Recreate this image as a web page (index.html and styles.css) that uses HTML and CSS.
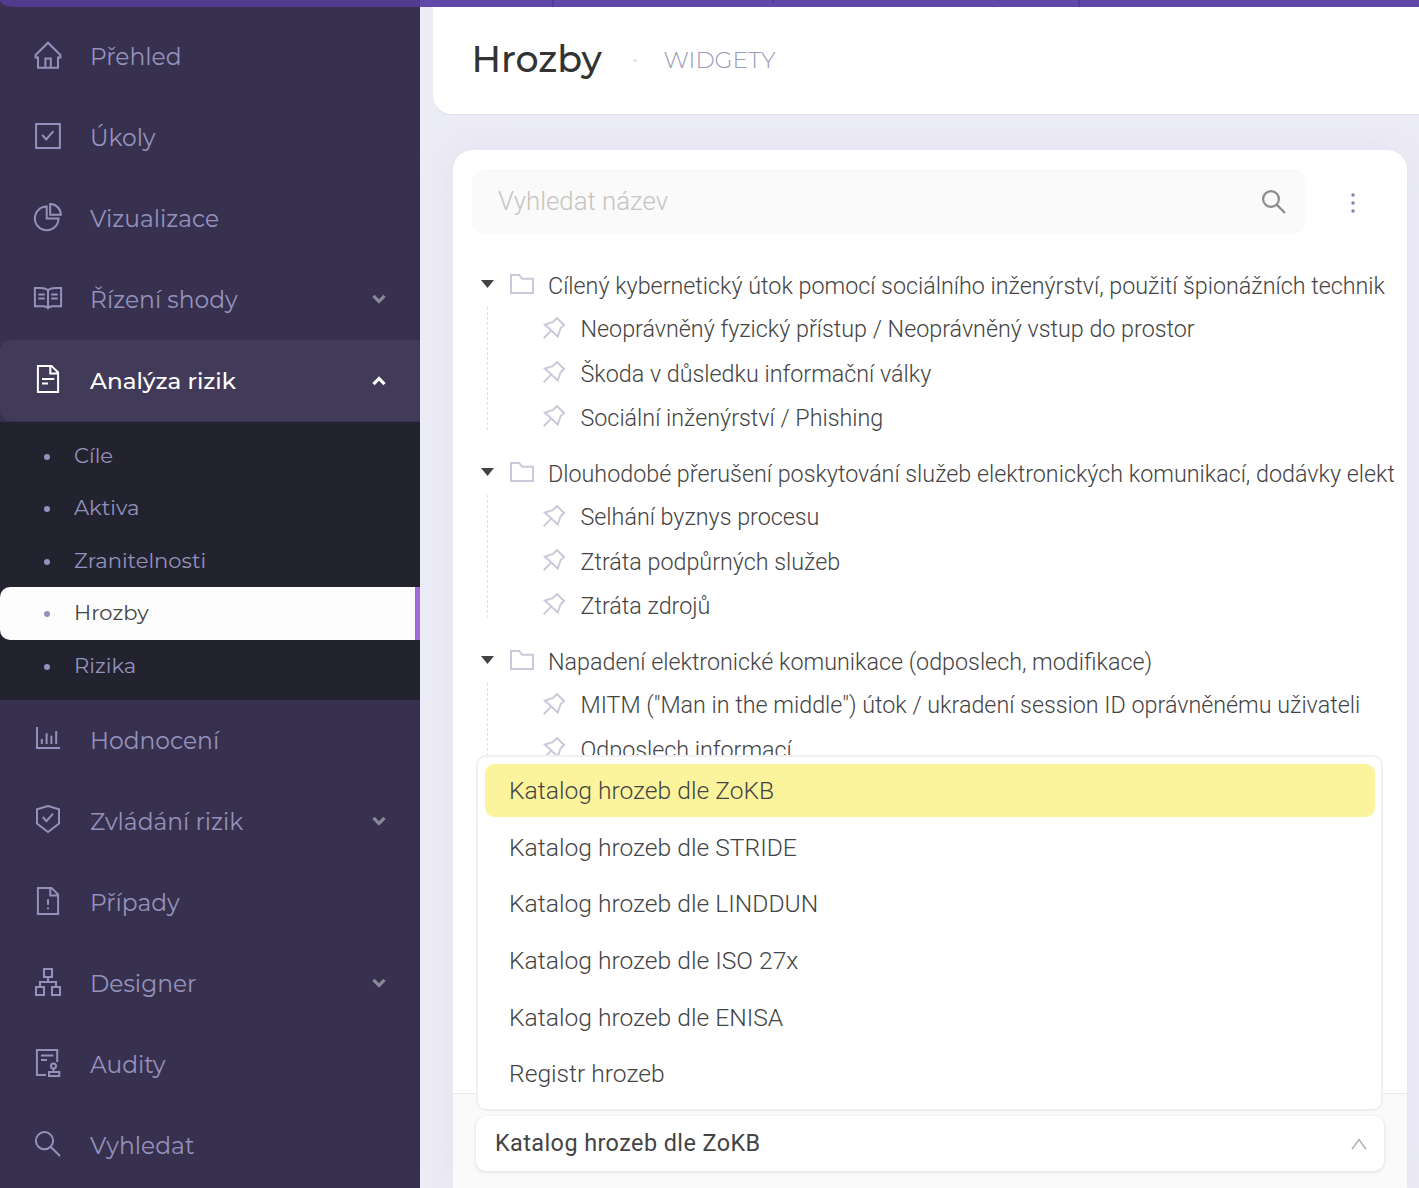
FILE: index.html
```html
<!DOCTYPE html>
<html lang="cs">
<head>
<meta charset="utf-8">
<title>Hrozby</title>
<link rel="stylesheet" href="styles.css">
</head>
<body>
<svg class="sprite" aria-hidden="true">
  <symbol id="chevron" viewBox="0 0 14 10"><path d="M1.500 1.800 7 7.500 12.500 1.800"/></symbol>
  <symbol id="folder" viewBox="0 0 24 20"><path d="M1 1H9.2L12.2 4.8H23V19H1z"/></symbol>
  <symbol id="pin" viewBox="0 0 22 22"><path d="M14 1 21 8 17.6 11.2 14.8 19.4 1.8 7.6 9.6 5.2zM8.2 13.6.6 21.4"/></symbol>
  <symbol id="caret" viewBox="0 0 13 8"><path d="M0 0H13L6.5 8z"/></symbol>
</svg>
<div class="topbar"><div class="topbar-brand"></div><div class="topbar-main"><i class="tick tick-a"></i><i class="tick tick-b"></i><i class="tick tick-c"></i><i class="tick tick-d"></i></div></div>
<div class="shell">
  <nav class="sidebar">
    <a class="item"><svg class="icon" viewBox="0 0 28 28"><path d="M4 26.7V16.4H1.6V14L14 1.7 26.4 14v2.4H24V26.7zM11.4 26.5V17.4h5.4v9.1"/></svg><span class="label">Přehled</span></a>
    <a class="item"><svg class="icon" viewBox="0 0 28 28"><path d="M2.1 2.1H25.9V25.9H2.1zM8.2 12.8 12.2 17.4 19.4 9.2"/></svg><span class="label">Úkoly</span></a>
    <a class="item"><svg class="icon" viewBox="0 0 28 28"><path d="M12.7 3.6A11.8 11.8 0 1 0 24.5 15.4H12.7zM16.2 1.1A10.7 10.7 0 0 1 26.9 11.8H16.2z"/></svg><span class="label">Vizualizace</span></a>
    <a class="item"><svg class="icon" viewBox="0 0 28 28"><path d="M14 6C11.6 4.2 9 3.9 6.5 3.9H.9V22.2H9.5C11.5 22.2 13 22.9 14 24.2 15 22.9 16.5 22.2 18.5 22.2H27.1V3.9H21.5C19 3.9 16.4 4.2 14 6zM14 6V24M4.3 10.4H10.8M4.3 14.4H10.8M17.2 10.4H23.7M17.2 14.4H23.7"/></svg><span class="label">Řízení shody</span><svg class="chev"><use href="#chevron"/></svg></a>
    <a class="item active"><svg class="icon" viewBox="0 0 28 28"><path d="M3.9.9H17.5L24.1 7.5V27.1H3.9zM16.3 1V8.6H24M8 14H20.3M8 18.4H14"/></svg><span class="label">Analýza rizik</span><svg class="chev up"><use href="#chevron"/></svg></a>
    <div class="submenu">
      <a class="sub"><span>Cíle</span></a>
      <a class="sub"><span>Aktiva</span></a>
      <a class="sub"><span>Zranitelnosti</span></a>
      <a class="sub current"><span>Hrozby</span></a>
      <a class="sub"><span>Rizika</span></a>
    </div>
    <a class="item"><svg class="icon" viewBox="0 0 28 28"><path d="M3 2V23H26M7.8 14V19M12.6 8.3V19M17.4 10.7V19M22.2 6V19"/></svg><span class="label">Hodnocení</span></a>
    <a class="item"><svg class="icon" viewBox="0 0 28 28"><path d="M14 0 25 3.2V17.5L14 26 3 17.5V3.2zM8.8 11 12.4 15.2 19 7.6"/></svg><span class="label">Zvládání rizik</span><svg class="chev"><use href="#chevron"/></svg></a>
    <a class="item"><svg class="icon" viewBox="0 0 28 28"><path d="M3.9.9H17.5L24.1 7.5V27.1H3.9zM16.3 1V8.6H24M14 12.3V17.8M14 20.4V22.2"/></svg><span class="label">Případy</span></a>
    <a class="item"><svg class="icon" viewBox="0 0 28 28"><path d="M10 1H18V9H10zM2 19H10V27H2zM18 19H26V27H18zM14 9V14M6 19V14H22V19"/></svg><span class="label">Designer</span><svg class="chev"><use href="#chevron"/></svg></a>
    <a class="item"><svg class="icon" viewBox="0 0 28 28"><path d="M23.2 13V.9H2.9V26.1H12M7 6.5H19.3M7 11H13M19.5 19.5V22.8M15 22.9H25.3V27H15z"/><circle cx="19.5" cy="17" r="2.5"/></svg><span class="label">Audity</span></a>
    <a class="item"><svg class="icon" viewBox="0 0 28 28"><circle cx="10.5" cy="10.7" r="8.6"/><path d="M16.6 16.8 26 26"/></svg><span class="label">Vyhledat</span></a>
  </nav>
  <main class="main">
    <header class="header"><h1 class="title">Hrozby</h1><i class="sep"></i><span class="tab">WIDGETY</span></header>
    <section class="card">
      <div class="tools">
        <div class="search"><span>Vyhledat název</span><svg class="glass" viewBox="0 0 24 24"><circle cx="9" cy="9" r="7.9"/><path d="M14.6 14.6 23 23"/></svg></div>
        <svg class="dots" viewBox="0 0 4 20"><circle cx="2" cy="2" r="1.7"/><circle cx="2" cy="10" r="1.7"/><circle cx="2" cy="18" r="1.7"/></svg>
      </div>
      <div class="tree">
        <div class="group">
          <div class="root"><svg class="caret"><use href="#caret"/></svg><svg class="folder"><use href="#folder"/></svg>Cílený kybernetický útok pomocí sociálního inženýrství, použití špionážních technik</div>
          <div class="kids">
            <div class="kid"><svg class="pin"><use href="#pin"/></svg>Neoprávněný fyzický přístup / Neoprávněný vstup do prostor</div>
            <div class="kid"><svg class="pin"><use href="#pin"/></svg>Škoda v důsledku informační války</div>
            <div class="kid"><svg class="pin"><use href="#pin"/></svg>Sociální inženýrství / Phishing</div>
          </div>
        </div>
        <div class="group">
          <div class="root"><svg class="caret"><use href="#caret"/></svg><svg class="folder"><use href="#folder"/></svg>Dlouhodobé přerušení poskytování služeb elektronických komunikací, dodávky elekt</div>
          <div class="kids">
            <div class="kid"><svg class="pin"><use href="#pin"/></svg>Selhání byznys procesu</div>
            <div class="kid"><svg class="pin"><use href="#pin"/></svg>Ztráta podpůrných služeb</div>
            <div class="kid"><svg class="pin"><use href="#pin"/></svg>Ztráta zdrojů</div>
          </div>
        </div>
        <div class="group">
          <div class="root"><svg class="caret"><use href="#caret"/></svg><svg class="folder"><use href="#folder"/></svg>Napadení elektronické komunikace (odposlech, modifikace)</div>
          <div class="kids">
            <div class="kid"><svg class="pin"><use href="#pin"/></svg>MITM ("Man in the middle") útok / ukradení session ID oprávněnému uživateli</div>
            <div class="kid"><svg class="pin"><use href="#pin"/></svg>Odposlech informací</div>
          </div>
        </div>
      </div>
      <footer class="foot">
        <div class="select"><span>Katalog hrozeb dle ZoKB</span><svg class="open" viewBox="0 0 16 12"><path d="M1 11.2 8 1.5 15 11.2"/></svg></div>
        <div class="menu">
          <div class="opt chosen">Katalog hrozeb dle ZoKB</div>
          <div class="opt">Katalog hrozeb dle STRIDE</div>
          <div class="opt">Katalog hrozeb dle LINDDUN</div>
          <div class="opt">Katalog hrozeb dle ISO 27x</div>
          <div class="opt">Katalog hrozeb dle ENISA</div>
          <div class="opt">Registr hrozeb</div>
        </div>
      </footer>
    </section>
  </main>
</div>
</body>
</html>
```
FILE: styles.css
```css
* { box-sizing: border-box; }
body {
  margin: 0;
  height: 1188px;
  display: flex;
  flex-direction: column;
  overflow: hidden;
  background: #ececf6;
  color: #444;
  font-family: Roboto, "Liberation Sans", sans-serif;
  font-weight: 300;
}
.sprite { position: absolute; width: 0; height: 0; }
svg { fill: none; flex: none; display: block; }

/* top strip */
.topbar { display: flex; height: 7px; flex: none; background: #37304e; }
.topbar-brand { width: 420px; background: #503b8d; border-bottom-left-radius: 14px 7px; }
.topbar-main { position: relative; flex: 1; background: #6148a8; }
.tick { position: absolute; top: 0; width: 2px; height: 7px; background: #523d92; }
.tick-a { left: 132px; }
.tick-b { left: 352px; height: 3px; }
.tick-c { left: 578px; height: 1px; }
.tick-d { left: 658px; }

.shell { display: flex; flex: 1; min-height: 0; }

/* sidebar */
.sidebar {
  width: 420px;
  flex: none;
  padding-top: 9px;
  background: #37304e;
  color: #9492bc;
  font-family: Montserrat, Inter, "Liberation Sans", sans-serif;
  font-weight: 400;
}
.item {
  display: flex;
  align-items: center;
  height: 81px;
  padding: 0 34.5px 0 34px;
  font-size: 23.4px;
  white-space: nowrap;
}
.icon {
  width: 28px;
  height: 28px;
  margin: 0 28px 3px 0;
  overflow: visible;
  stroke: currentColor;
  stroke-width: 2;
}
.item .label { padding-bottom: 1px; }
.chev { width: 14px; height: 10px; margin: 0 0 2px auto; overflow: visible; stroke: #8b8898; stroke-width: 3.2; }
.active { background: #413a58; color: #fff; border-radius: 10px 0 0 10px; }
.active .label { padding: 1px 0 0; font-weight: 500; font-size: 23.1px; }
.chev.up { margin-bottom: 0; transform: rotate(180deg); stroke: #fff; }

.submenu { margin-top: 1px; height: 278px; padding-top: 7.4px; background: #22232f; }
.sub {
  display: flex;
  align-items: center;
  height: 52.6px;
  padding: 0 0 1px 44px;
  font-size: 21.1px;
}
.sub:first-child { padding-bottom: 0; }
.sub::before { content: ""; width: 6px; height: 6px; margin: 3px 24px 0 0; border-radius: 50%; background: #9492bc; }
.current { background: #fdfdfd; color: #444; border-right: 5px solid #a06edb; border-radius: 10px 0 0 10px; }

/* content */
.main { flex: 1; min-width: 0; display: flex; flex-direction: column; }
.header {
  display: flex;
  align-items: center;
  height: 108px;
  flex: none;
  margin-left: 13px;
  padding-left: 38.5px;
  background: #fff;
  border-bottom: 1px solid #dedeee;
  border-bottom-left-radius: 19px;
  font-family: Montserrat, Inter, "Liberation Sans", sans-serif;
}
.title { width: 161.5px; margin: 0 0 3px; color: #333; font-size: 36.4px; font-weight: 500; }
.sep { width: 4px; height: 3px; border-radius: 2px; background: #e4e4ea; }
.tab { margin-left: 26.5px; padding-bottom: 2px; color: #9b9ab4; font-size: 23.2px; font-weight: 350; }

.card {
  flex: 1;
  min-height: 0;
  display: flex;
  flex-direction: column;
  margin: 35px 12px 0 33px;
  background: #fff;
  border-radius: 20px 20px 0 0;
  box-shadow: 0 0 34px rgba(200, 195, 232, .26);
}
.tools { display: flex; align-items: center; padding: 19px 0 0 19px; }
.search {
  display: flex;
  align-items: center;
  justify-content: space-between;
  width: 834px;
  height: 65px;
  padding: 0 20px 0 26px;
  border-radius: 13px;
  background: #fafafa;
  color: #c6c4c0;
  font-size: 25.8px;
}
.search span { padding-bottom: 1px; }
.glass { width: 24px; height: 24px; stroke: #8a8a8a; stroke-width: 2.2; overflow: visible; }
.dots { width: 4px; height: 20px; margin: 3px 0 0 45px; fill: #7e7fb0; }

.tree { flex: 1; min-height: 0; overflow: hidden; margin: 0 13px 0 19px; padding-top: 30px; font-size: 23.31px; white-space: nowrap; }
.group { height: 188px; }
.root { display: flex; align-items: center; height: 43px; padding-left: 9px; }
.caret { width: 13px; height: 8px; margin: 0 16px 3px 0; fill: #444; }
.folder { width: 24px; height: 20px; margin: 0 14px 3px 0; stroke: #cbc9da; stroke-width: 2; }
.kids { position: relative; margin-left: 15px; padding-left: 56px; height: 133px; }
.kids::before {
  content: "";
  position: absolute;
  left: 0;
  top: 0;
  width: 1px;
  height: 124px;
  background: repeating-linear-gradient(#e0e0e0 0 3px, transparent 3px 5px);
}
.kid { display: flex; align-items: center; height: 44.4px; }
.pin { width: 22px; height: 22px; margin: 0 15.5px 3px 0; stroke: #cbc9da; stroke-width: 2; }

.foot { position: relative; height: 95px; flex: none; padding: 22px 23px 0 23px; background: #fafafa; border-top: 1px solid #e8e8e8; }
.select {
  display: flex;
  align-items: center;
  justify-content: space-between;
  height: 55px;
  padding: 0 17px 1px 19px;
  border-radius: 10px;
  background: #fff;
  box-shadow: 0 1px 3px 1px rgba(0, 0, 0, .08);
  font-size: 23.4px;
  font-weight: 400;
  letter-spacing: .43px;
}
.open { width: 16px; height: 12px; margin-top: 2px; stroke: #b4b4b4; stroke-width: 1.6; }
.menu {
  position: absolute;
  left: 23px;
  right: 24px;
  bottom: 77px;
  height: 356px;
  display: flex;
  flex-direction: column;
  gap: 3.7px;
  padding: 7px 6px 7px 7px;
  border: 2px solid #f0f0f0;
  border-radius: 10px;
  background: #fff;
  font-size: 24.64px;
}
.opt { display: flex; align-items: center; height: 53px; flex: none; padding-left: 24px; border-radius: 9px; }
.chosen { background: #fcf49d; }
```
